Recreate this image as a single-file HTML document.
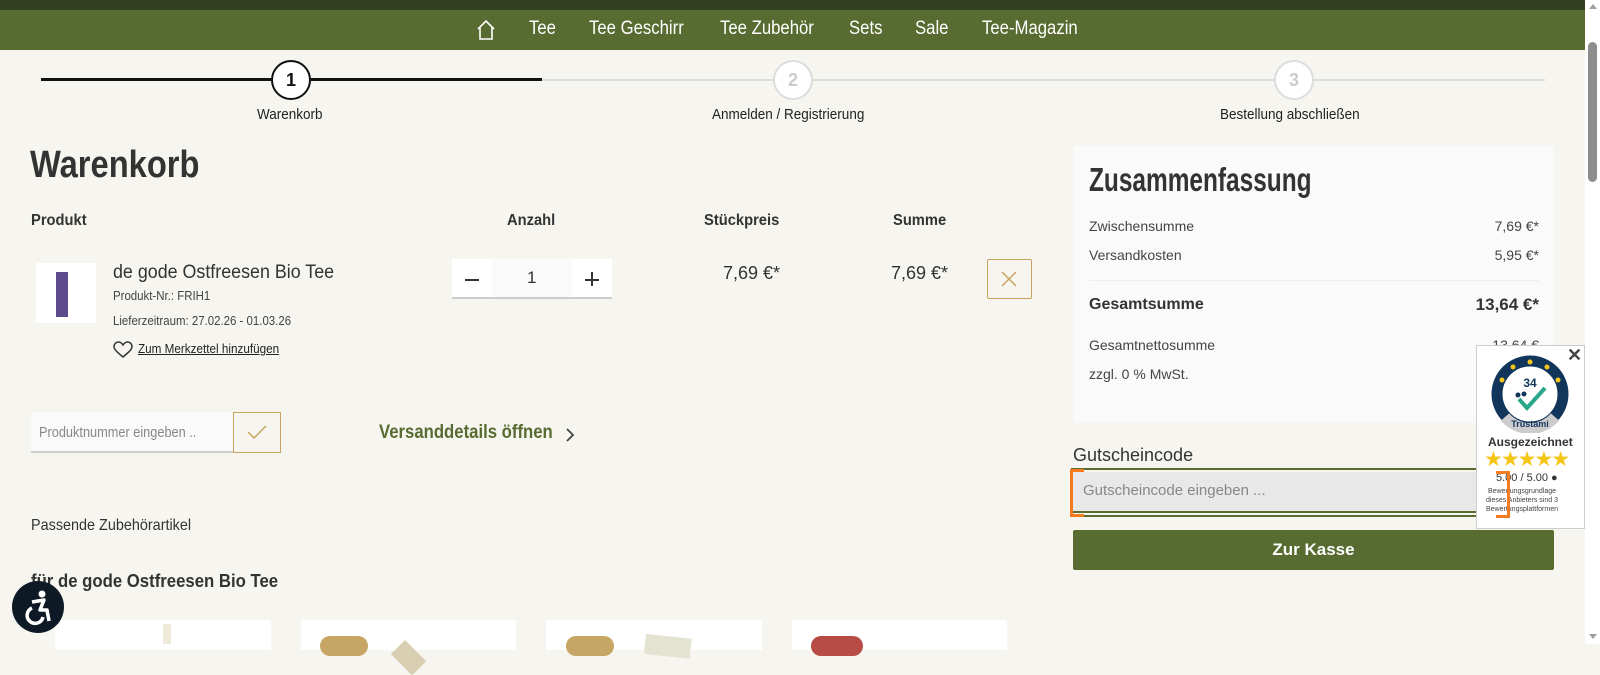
<!DOCTYPE html>
<html><head><meta charset="utf-8"><style>
*{box-sizing:border-box;margin:0;padding:0}
body{width:1600px;height:644px;overflow:hidden;background:#f6f5f0;font-family:"Liberation Sans",sans-serif;color:#333;position:relative}
.a{position:absolute;white-space:nowrap;transform-origin:left top}
.top{left:0;top:0;width:1585px;height:10px;background:#334122}
.nav{left:0;top:10px;width:1585px;height:40px;background:#586b30}
.nav span{position:absolute;top:8px;color:#fff;font-size:19px;transform:scaleX(.88);transform-origin:left top}
.circ{width:40px;height:40px;border-radius:50%;background:#fff;text-align:center;line-height:36px;font-size:18px;font-weight:bold}
.hd{font-weight:bold;font-size:16px;color:#333}
.sr{font-size:14px;color:#444}
</style></head><body>
<div class="a top"></div>
<div class="a nav">
<svg style="position:absolute;left:475px;top:9px" width="22" height="22" viewBox="0 0 22 22"><path d="M3 10 L11 2 L19 10 M5 8 V20 H17 V8" fill="none" stroke="#fff" stroke-width="1.6"/></svg>
<span style="left:529px">Tee</span><span style="left:589px">Tee Geschirr</span><span style="left:720px">Tee Zubehör</span><span style="left:849px">Sets</span><span style="left:915px">Sale</span><span style="left:982px">Tee-Magazin</span>
</div>
<div class="a" style="left:1585px;top:0;width:15px;height:644px;background:#fff"></div>
<div class="a" style="left:1588px;top:42px;width:9px;height:140px;border-radius:5px;background:#8d8d8d"></div>
<div class="a" style="left:1589px;top:4px;width:0;height:0;border-left:4px solid transparent;border-right:4px solid transparent;border-bottom:5px solid #a0a0a0"></div>
<div class="a" style="left:1589px;top:634px;width:0;height:0;border-left:4px solid transparent;border-right:4px solid transparent;border-top:5px solid #a0a0a0"></div>
<div class="a" style="left:41px;top:79px;width:1504px;height:2px;background:#ddd"></div>
<div class="a" style="left:41px;top:78px;width:501px;height:3px;background:#111"></div>
<div class="a circ" style="left:271px;top:60px;border:2px solid #111;color:#111">1</div>
<div class="a circ" style="left:773px;top:60px;border:2px solid #ddd;color:#ccc">2</div>
<div class="a circ" style="left:1274px;top:60px;border:2px solid #ddd;color:#ccc">3</div>
<div class="a" style="left:257px;top:106px;font-size:15px;color:#222;transform:scaleX(.9)">Warenkorb</div>
<div class="a" style="left:712px;top:106px;font-size:15px;color:#222;transform:scaleX(.9)">Anmelden / Registrierung</div>
<div class="a" style="left:1220px;top:106px;font-size:15px;color:#222;transform:scaleX(.9)">Bestellung abschließen</div>
<div class="a" style="left:30px;top:144px;font-size:38px;font-weight:bold;color:#333;transform:scaleX(.86)">Warenkorb</div>
<div class="a hd" style="left:31px;top:212px;transform:scaleX(.92)">Produkt</div>
<div class="a hd" style="left:507px;top:212px;transform:scaleX(.92)">Anzahl</div>
<div class="a hd" style="left:704px;top:212px;transform:scaleX(.92)">Stückpreis</div>
<div class="a hd" style="left:893px;top:212px;transform:scaleX(.92)">Summe</div>
<div class="a" style="left:36px;top:263px;width:60px;height:60px;background:#fff"></div>
<div class="a" style="left:56px;top:272px;width:12px;height:45px;background:#5b4a8c"></div>
<div class="a" style="left:113px;top:262px;font-size:19px;color:#333;transform:scaleX(.94)">de gode Ostfreesen Bio Tee</div>
<div class="a" style="left:113px;top:288px;font-size:13px;color:#444;transform:scaleX(.88)">Produkt-Nr.: FRIH1</div>
<div class="a" style="left:113px;top:313px;font-size:13px;color:#444;transform:scaleX(.88)">Lieferzeitraum: 27.02.26 - 01.03.26</div>
<svg class="a" style="left:113px;top:341px" width="20" height="18" viewBox="0 0 20 18"><path d="M10 16 C4 11 1 8.5 1 5.5 C1 3 3 1 5.5 1 C7.5 1 9 2.5 10 4 C11 2.5 12.5 1 14.5 1 C17 1 19 3 19 5.5 C19 8.5 16 11 10 16Z" fill="none" stroke="#333" stroke-width="1.5"/></svg>
<div class="a" style="left:138px;top:341px;font-size:13px;color:#222;text-decoration:underline;transform:scaleX(.9)">Zum Merkzettel hinzufügen</div>
<div class="a" style="left:452px;top:259px;width:160px;height:40px;background:#fafafa;border-bottom:2px solid #ccc"></div>
<div class="a" style="left:452px;top:259px;width:40px;height:38px;background:#fff"></div>
<div class="a" style="left:572px;top:259px;width:40px;height:38px;background:#fff"></div>
<div class="a" style="left:465px;top:279px;width:14px;height:1.5px;background:#333"></div>
<div class="a" style="left:585px;top:279px;width:14px;height:1.5px;background:#333"></div>
<div class="a" style="left:591px;top:272px;width:1.5px;height:14px;background:#333"></div>
<div class="a" style="left:527px;top:268px;font-size:17px;color:#333">1</div>
<div class="a" style="left:680px;top:263px;width:100px;text-align:right;font-size:18px;color:#333">7,69 €*</div>
<div class="a" style="left:848px;top:263px;width:100px;text-align:right;font-size:18px;color:#333">7,69 €*</div>
<div class="a" style="left:987px;top:259px;width:45px;height:40px;border:1px solid #c8a45e;border-radius:2px"></div>
<svg class="a" style="left:1001px;top:271px" width="16" height="16"><path d="M1 1L15 15M15 1L1 15" stroke="#c8a45e" stroke-width="1.5"/></svg>
<div class="a" style="left:31px;top:412px;width:203px;height:41px;background:#fafafa;border-bottom:2px solid #ccc"></div>
<div class="a" style="left:39px;top:424px;font-size:15px;color:#888;transform:scaleX(.85)">Produktnummer eingeben ..</div>
<div class="a" style="left:233px;top:412px;width:48px;height:41px;border:1px solid #c8a45e"></div>
<svg class="a" style="left:247px;top:424px" width="20" height="16"><path d="M1 8L7 14L19 2" fill="none" stroke="#c8a45e" stroke-width="1.5"/></svg>
<div class="a" style="left:379px;top:422px;font-size:19px;font-weight:bold;color:#586b30;transform:scaleX(.88)">Versanddetails öffnen</div>
<svg class="a" style="left:565px;top:428px" width="10" height="14"><path d="M2 1L8 7L2 13" fill="none" stroke="#444" stroke-width="1.8"/></svg>
<div class="a" style="left:31px;top:517px;font-size:16px;color:#333;transform:scaleX(.9)">Passende Zubehörartikel</div>
<div class="a" style="left:31px;top:571px;font-size:18px;font-weight:bold;color:#333;transform:scaleX(.93)">für de gode Ostfreesen Bio Tee</div>
<div class="a" style="left:55px;top:620px;width:216px;height:30px;background:#fff"></div>
<div class="a" style="left:301px;top:620px;width:215px;height:30px;background:#fff"></div>
<div class="a" style="left:546px;top:620px;width:216px;height:30px;background:#fff"></div>
<div class="a" style="left:792px;top:620px;width:215px;height:30px;background:#fff"></div>
<div class="a" style="left:163px;top:624px;width:8px;height:20px;background:#f0eadc"></div>
<div class="a" style="left:320px;top:636px;width:48px;height:20px;border-radius:14px;background:#c6a664"></div>
<div class="a" style="left:566px;top:636px;width:48px;height:20px;border-radius:14px;background:#c6a664"></div>
<div class="a" style="left:811px;top:636px;width:52px;height:20px;border-radius:14px;background:#b84b45"></div>
<div class="a" style="left:405px;top:640px;width:30px;height:20px;background:#d8cfb3;transform:rotate(45deg)"></div>
<div class="a" style="left:646px;top:634px;width:46px;height:20px;background:#e4e2d0;transform:rotate(6deg)"></div>
<div class="a" style="left:12px;top:581px;width:52px;height:52px;border-radius:50%;background:#0d1a26"></div>
<svg class="a" style="left:20px;top:588px" width="36" height="38" viewBox="0 0 36 38"><circle cx="22" cy="6" r="3.5" fill="#fff"/><path d="M12 14 L24 12 L20 22 L27 22 L29 33" fill="none" stroke="#fff" stroke-width="3.5" stroke-linejoin="round"/><path d="M12 20 A8 8 0 1 0 23 29" fill="none" stroke="#fff" stroke-width="3.5"/></svg>
<div class="a" style="left:1073px;top:146px;width:481px;height:277px;background:#fafafa"></div>
<div class="a" style="left:1089px;top:161px;font-size:33px;font-weight:bold;color:#333;transform:scaleX(.74)">Zusammenfassung</div>
<div class="a sr" style="left:1089px;top:218px">Zwischensumme</div><div class="a sr" style="left:1439px;top:218px;width:100px;text-align:right">7,69 €*</div>
<div class="a sr" style="left:1089px;top:247px">Versandkosten</div><div class="a sr" style="left:1439px;top:247px;width:100px;text-align:right">5,95 €*</div>
<div class="a" style="left:1089px;top:280px;width:450px;height:1px;background:#eee"></div>
<div class="a" style="left:1089px;top:296px;font-size:16px;font-weight:bold;color:#333">Gesamtsumme</div><div class="a" style="left:1419px;top:295px;width:120px;text-align:right;font-size:17px;font-weight:bold;color:#333">13,64 €*</div>
<div class="a sr" style="left:1089px;top:337px">Gesamtnettosumme</div><div class="a sr" style="left:1439px;top:337px;width:100px;text-align:right">13,64 €</div>
<div class="a sr" style="left:1089px;top:366px">zzgl. 0 % MwSt.</div>
<div class="a" style="left:1073px;top:445px;font-size:18px;color:#333">Gutscheincode</div>
<div class="a" style="left:1071px;top:468px;width:486px;height:49px;border-top:2px solid #586b30;border-bottom:2px solid #586b30;border-left:2px solid #586b30;background:#f6f5f0;padding:2px 0"><div style="height:41px;background:#e8e8e8;border-bottom:2px solid #586b30"></div></div>
<div class="a" style="left:1070px;top:469px;width:14px;height:48px;border:3px solid #f47b20;border-right:none"></div>
<div class="a" style="left:1083px;top:482px;font-size:15px;color:#888">Gutscheincode eingeben ...</div>
<div class="a" style="left:1073px;top:530px;width:481px;height:40px;background:#586b30;border-radius:2px;color:#fff;text-align:center;line-height:40px;font-size:17px;font-weight:bold">Zur Kasse</div>
<div class="a" style="left:1476px;top:345px;width:109px;height:184px;background:#fff;border:1px solid #ccc"></div>
<div class="a" style="left:1567px;top:345px;font-size:18px;font-weight:bold;color:#444">✕</div>
<svg class="a" style="left:1491px;top:355px" width="78" height="78" viewBox="0 0 78 78"><circle cx="39" cy="39" r="33" fill="none" stroke="#12355b" stroke-width="11"/><path d="M14 62 A33 33 0 0 0 64 62" fill="none" stroke="#ccc" stroke-width="11"/><text x="39" y="32" text-anchor="middle" font-size="12" font-weight="bold" fill="#12355b" font-family="Liberation Sans">34</text><path d="M28 44 L36 53 L54 33" fill="none" stroke="#2aa68a" stroke-width="4"/><circle cx="27" cy="40" r="2.5" fill="#12355b"/><circle cx="33" cy="39" r="2.5" fill="#12355b"/><g fill="#f5c518"><circle cx="39" cy="7" r="2.5"/><circle cx="22" cy="12" r="2.5"/><circle cx="56" cy="12" r="2.5"/><circle cx="11" cy="25" r="2.5"/><circle cx="67" cy="25" r="2.5"/></g><text x="39" y="72" text-anchor="middle" font-size="9" font-weight="bold" fill="#12355b" font-family="Liberation Sans">Trustami</text></svg>
<div class="a" style="left:1488px;top:435px;font-size:12px;font-weight:bold;color:#333">Ausgezeichnet</div>
<div class="a" style="left:1484px;top:447px;font-size:21px;color:#f5c518;letter-spacing:-2px">★★★★★</div>
<div class="a" style="left:1496px;top:472px;font-size:11px;color:#333">5.00 / 5.00 ●</div>
<div class="a" style="left:1486px;top:487px;font-size:7px;line-height:9px;color:#444;text-align:center">Bewertungsgrundlage<br>dieses Anbieters sind 3<br>Bewertungsplattformen</div>
<div class="a" style="left:1496px;top:471px;width:14px;height:47px;border:3px solid #f47b20;border-left:none"></div>
</body></html>
